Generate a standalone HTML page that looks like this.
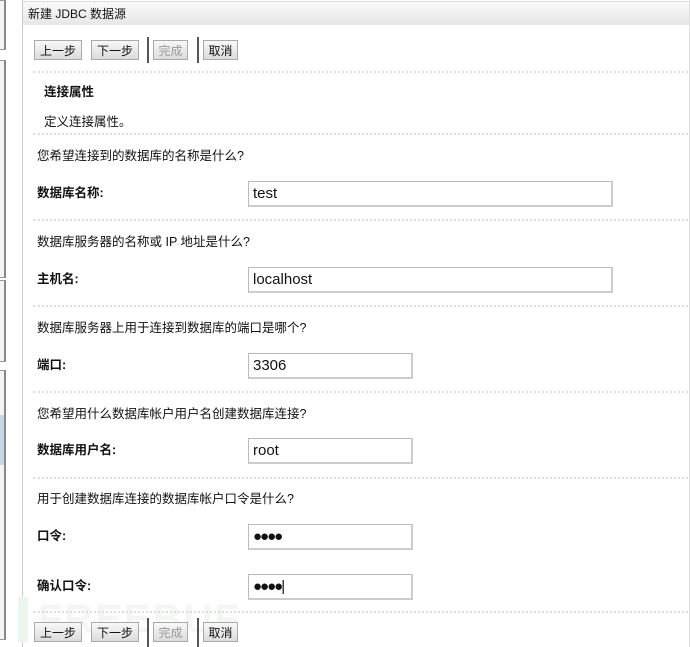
<!DOCTYPE html><html><head><meta charset="utf-8"><style>
body{margin:0;width:690px;height:647px;background:#fff;position:relative;overflow:hidden;font-family:"Liberation Sans","Noto Sans CJK SC",sans-serif;color:#111}
.a{position:absolute}
.lb{position:absolute;left:0;width:4px;border:1px solid #999;border-left:none;border-right:2px solid #888;background:#f4f4f4}
.main{position:absolute;left:22px;top:0;width:666px;height:647px;border-left:1px solid #ccc;border-right:1px solid #ddd}
.title{position:absolute;left:23px;top:1px;width:666px;height:24px;background:linear-gradient(#fafafa,#e6e6e6);border-top:1px solid #ddd;font-size:12px;line-height:24px;padding-left:5px;box-sizing:border-box}
.btn{position:absolute;height:20px;border:1px solid #aaa;background:linear-gradient(#f8f8f8,#dcdcdc);font-size:12px;line-height:20px;text-align:center;box-sizing:border-box}
.sep{position:absolute;width:2px;background:#555}
.hr{position:absolute;left:33px;width:655px;border-top:2px dotted #ddd}
.t{position:absolute;font-size:12.5px;white-space:nowrap}
.b{font-weight:bold}
.in{position:absolute;left:248px;height:26px;border:1px solid #bbb;border-right:2px solid #ccc;border-bottom:2px solid #ccc;box-sizing:border-box;font-size:15px;line-height:23px;padding-left:4px;background:#fff}
.pw{font-size:15px;letter-spacing:-2px;line-height:24px}
</style></head><body>
<div class="lb" style="top:0;height:48px"></div>
<div class="lb" style="top:60px;height:216px"></div>
<div class="lb" style="top:280px;height:80px"></div>
<div class="lb" style="top:370px;height:268px"></div>
<div class="a" style="left:0;top:415px;width:4px;height:50px;background:#c8d6ea"></div>
<div class="main"></div>
<div class="a" style="left:18px;top:597px;width:10px;height:45px;background:#ecf5ee"></div>
<div class="a" style="left:38px;top:597px;font-size:40px;font-weight:bold;color:#f4f6f4;letter-spacing:2px">FREEBUF</div>
<div class="title">新建 JDBC 数据源</div>
<div class="btn" style="left:34px;top:40px;width:48px">上一步</div>
<div class="btn" style="left:91px;top:40px;width:48px">下一步</div>
<div class="sep" style="left:147px;top:37px;height:26px"></div>
<div class="btn" style="left:153px;top:40px;width:35px;color:#999">完成</div>
<div class="sep" style="left:197px;top:37px;height:26px"></div>
<div class="btn" style="left:203px;top:40px;width:35px">取消</div>
<div class="hr" style="top:71px"></div>
<div class="t b" style="left:44px;top:81px">连接属性</div>
<div class="t" style="left:44px;top:111px">定义连接属性。</div>
<div class="hr" style="top:133px"></div>
<div class="t" style="left:37px;top:145px">您希望连接到的数据库的名称是什么?</div>
<div class="t b" style="left:37px;top:182px">数据库名称:</div>
<div class="in" style="top:181px;width:365px">test</div>
<div class="hr" style="top:219px"></div>
<div class="t" style="left:37px;top:231px">数据库服务器的名称或 IP 地址是什么?</div>
<div class="t b" style="left:37px;top:268px">主机名:</div>
<div class="in" style="top:267px;width:365px">localhost</div>
<div class="hr" style="top:305px"></div>
<div class="t" style="left:37px;top:317px">数据库服务器上用于连接到数据库的端口是哪个?</div>
<div class="t b" style="left:37px;top:354px">端口:</div>
<div class="in" style="top:353px;width:165px">3306</div>
<div class="hr" style="top:391px"></div>
<div class="t" style="left:37px;top:403px">您希望用什么数据库帐户用户名创建数据库连接?</div>
<div class="t b" style="left:37px;top:439px">数据库用户名:</div>
<div class="in" style="top:438px;width:165px">root</div>
<div class="hr" style="top:477px"></div>
<div class="t" style="left:37px;top:488px">用于创建数据库连接的数据库帐户口令是什么?</div>
<div class="t b" style="left:37px;top:525px">口令:</div>
<div class="in pw" style="top:524px;width:165px">●●●●</div>
<div class="t b" style="left:37px;top:575px">确认口令:</div>
<div class="in pw" style="top:574px;width:165px">●●●●<span style="letter-spacing:0;font-weight:normal">|</span></div>
<div class="hr" style="top:611px"></div>
<div class="btn" style="left:34px;top:622px;width:48px">上一步</div>
<div class="btn" style="left:91px;top:622px;width:48px">下一步</div>
<div class="sep" style="left:147px;top:618px;height:29px"></div>
<div class="btn" style="left:153px;top:622px;width:35px;color:#999">完成</div>
<div class="sep" style="left:197px;top:618px;height:29px"></div>
<div class="btn" style="left:203px;top:622px;width:35px">取消</div>
</body></html>
